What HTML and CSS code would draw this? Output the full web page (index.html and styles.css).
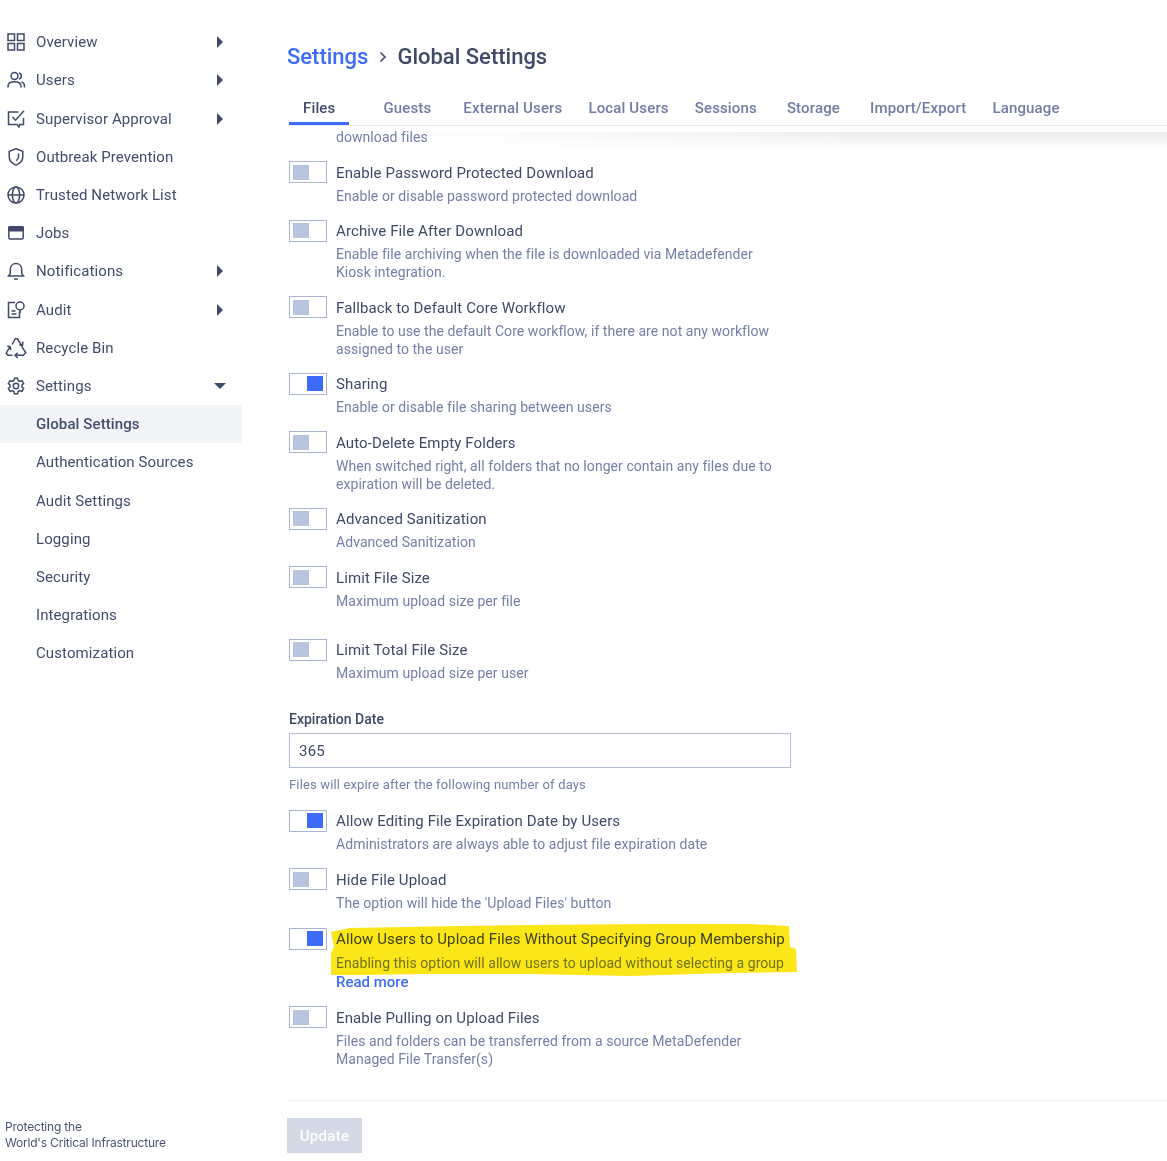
FILE: index.html
```html
<!DOCTYPE html>
<html lang="en">
<head>
<meta charset="utf-8">
<title>Global Settings</title>
<link rel="stylesheet" href="styles.css">
</head>
<body>
<div class="app">
  <aside class="sidebar">
    <nav class="menu">
      <a class="item"><svg class="icon" viewBox="0 0 20 20"><rect x="2" y="2" width="6.5" height="6.5"/><rect x="11.5" y="2" width="6.5" height="6.5"/><rect x="2" y="11.5" width="6.5" height="6.5"/><rect x="11.5" y="11.5" width="6.5" height="6.5"/></svg><span class="label">Overview</span><i class="caret"></i></a>
      <a class="item"><svg class="icon" viewBox="0 0 20 20"><circle cx="8.5" cy="6" r="3.4"/><path d="M2 17.5v-1.2c0-2.8 2.4-4.6 6.5-4.6s6.500 1.800 6.500 4.600v1.200M12.800 2.900c1.600.3 2.600 1.600 2.600 3.100s-1 2.800-2.600 3.100M15.500 11.900c1.700.6 3 2.100 3 4.300v1.300"/></svg><span class="label">Users</span><i class="caret"></i></a>
      <a class="item"><svg class="icon" viewBox="0 0 20 20"><path d="M12.500 3H2.500v12.500h8.500l2 2.500.7-2.500h3.800V9"/><path d="M6.500 8l3 3.200L18 1.800"/></svg><span class="label">Supervisor Approval</span><i class="caret"></i></a>
      <a class="item"><svg class="icon" viewBox="0 0 20 20"><path d="M10 1.800l6.800 2.400v5.600c0 4-2.800 6.900-6.800 8.300-4-1.400-6.800-4.300-6.800-8.300V4.200z"/><path d="M12.500 6.500v3c0 1.800-.9 3.200-2.500 4.200"/></svg><span class="label">Outbreak Prevention</span></a>
      <a class="item"><svg class="icon" viewBox="0 0 20 20"><circle cx="10" cy="10" r="8"/><ellipse cx="10" cy="10" rx="3.600" ry="8"/><path d="M2 10h16"/></svg><span class="label">Trusted Network List</span></a>
      <a class="item"><svg class="icon" viewBox="0 0 20 20"><rect x="2.800" y="3.700" width="14.400" height="12.400" rx="1.500"/><rect class="solid" x="2.800" y="3.700" width="14.400" height="4" rx="1"/></svg><span class="label">Jobs</span></a>
      <a class="item"><svg class="icon" viewBox="0 0 20 20"><path d="M2.500 15h15l-1.800-2.500V8.500C15.700 5 13.300 2.500 10 2.500S4.300 5 4.300 8.500v4z"/><path d="M8 18h4"/></svg><span class="label">Notifications</span><i class="caret"></i></a>
      <a class="item"><svg class="icon" viewBox="0 0 20 20"><path d="M9 2.500H2.500v15h11v-6"/><path d="M5.500 11h4M5.500 14h5"/><circle cx="14" cy="6" r="4"/><path d="M14 10v3"/></svg><span class="label">Audit</span><i class="caret"></i></a>
      <a class="item"><svg class="icon" viewBox="0 0 20 20"><path d="M6 6.500L9.300.7h2l4.700 7.300M13.300 6.300l3 1.700.7-4.300M1.300 8l2.700.7 1 3.300M4 8.700L.2 15.300l1.800 2H6.500M11.700 14.700L9 17.300l2.700 2.700M9 17.300h8.300l2.400-2.600-3.700-5.700"/></svg><span class="label">Recycle Bin</span></a>
      <a class="item"><svg class="icon" viewBox="0 0 20 20"><circle cx="10" cy="10" r="2.700"/><path d="M8.400 2.200h3.200l.5 2.300 1.700 1 2.200-.8 1.600 2.800-1.700 1.500v2l1.700 1.500-1.600 2.800-2.200-.8-1.700 1-.5 2.300H8.400l-.5-2.300-1.700-1-2.200.8-1.600-2.800 1.700-1.500v-2L2.400 7.500 4 4.700l2.200.8 1.700-1z"/></svg><span class="label">Settings</span><i class="caret caret-open"></i></a>
      <a class="item sub active"><span class="label">Global Settings</span></a>
      <a class="item sub"><span class="label">Authentication Sources</span></a>
      <a class="item sub"><span class="label">Audit Settings</span></a>
      <a class="item sub"><span class="label">Logging</span></a>
      <a class="item sub"><span class="label">Security</span></a>
      <a class="item sub"><span class="label">Integrations</span></a>
      <a class="item sub"><span class="label">Customization</span></a>
    </nav>
    <p class="tagline">Protecting the<br>World's Critical Infrastructure</p>
  </aside>

  <main class="main">
    <header class="head">
      <h1 class="crumbs"><a class="crumb-link">Settings</a><svg class="crumb-sep" viewBox="0 0 10 14"><path d="M2.500 2.500L7 7l-4.500 4.500"/></svg><span>Global Settings</span></h1>
      <div class="tabs">
        <a class="tab tab-active">Files</a>
        <a class="tab tab-guests">Guests</a>
        <a class="tab tab-external">External Users</a>
        <a class="tab">Local Users</a>
        <a class="tab">Sessions</a>
        <a class="tab tab-storage">Storage</a>
        <a class="tab tab-import">Import/Export</a>
        <a class="tab">Language</a>
      </div>
      <div class="tabs-shadow"></div>
    </header>

    <section class="content">
      <p class="desc clipped">download files</p>

      <div class="row">
        <span class="toggle"><b></b></span>
        <div class="text"><div class="title">Enable Password Protected Download</div><p class="desc">Enable or disable password protected download</p></div>
      </div>
      <div class="row">
        <span class="toggle"><b></b></span>
        <div class="text"><div class="title">Archive File After Download</div><p class="desc">Enable file archiving when the file is downloaded via Metadefender Kiosk integration.</p></div>
      </div>
      <div class="row">
        <span class="toggle"><b></b></span>
        <div class="text"><div class="title">Fallback to Default Core Workflow</div><p class="desc">Enable to use the default Core workflow, if there are not any workflow assigned to the user</p></div>
      </div>
      <div class="row">
        <span class="toggle on"><b></b></span>
        <div class="text"><div class="title">Sharing</div><p class="desc">Enable or disable file sharing between users</p></div>
      </div>
      <div class="row">
        <span class="toggle"><b></b></span>
        <div class="text"><div class="title">Auto-Delete Empty Folders</div><p class="desc">When switched right, all folders that no longer contain any files due to expiration will be deleted.</p></div>
      </div>
      <div class="row">
        <span class="toggle"><b></b></span>
        <div class="text"><div class="title">Advanced Sanitization</div><p class="desc">Advanced Sanitization</p></div>
      </div>
      <div class="row row-tall">
        <span class="toggle"><b></b></span>
        <div class="text"><div class="title">Limit File Size</div><p class="desc">Maximum upload size per file</p></div>
      </div>
      <div class="row">
        <span class="toggle"><b></b></span>
        <div class="text"><div class="title">Limit Total File Size</div><p class="desc">Maximum upload size per user</p></div>
      </div>

      <div class="field">
        <label class="field-label">Expiration Date</label>
        <div class="input">365</div>
        <p class="hint">Files will expire after the following number of days</p>
      </div>

      <div class="row">
        <span class="toggle on"><b></b></span>
        <div class="text"><div class="title">Allow Editing File Expiration Date by Users</div><p class="desc">Administrators are always able to adjust file expiration date</p></div>
      </div>
      <div class="row">
        <span class="toggle"><b></b></span>
        <div class="text"><div class="title">Hide File Upload</div><p class="desc">The option will hide the 'Upload Files' button</p></div>
      </div>
      <div class="row row-marked">
        <span class="toggle on"><b></b></span>
        <div class="text">
          <div class="title">Allow Users to Upload Files Without Specifying Group Membership</div>
          <p class="desc">Enabling this option will allow users to upload without selecting a group</p>
          <a class="more">Read more</a>
          <svg class="marker" viewBox="0 0 470 56" aria-hidden="true"><path d="M1 9L20 5 130 3 200 2 320 1 420 1 459 3 460 24 466 26 467 49 400 50 300 53 200 51 100 51 30 52 1 52 1 30 4 24z"/></svg>
        </div>
      </div>
      <div class="row">
        <span class="toggle"><b></b></span>
        <div class="text"><div class="title">Enable Pulling on Upload Files</div><p class="desc">Files and folders can be transferred from a source MetaDefender Managed File Transfer(s)</p></div>
      </div>
    </section>

    <footer class="foot">
      <button class="update" type="button">Update</button>
    </footer>
  </main>
</div>
</body>
</html>
```

FILE: styles.css
```css
* { box-sizing: border-box; }
html, body { margin: 0; height: 100%; }
body {
  font-family: Roboto, "Liberation Sans", sans-serif;
  color: #3f4a68;
  background: #fff;
  overflow: hidden;
}
p, h1 { margin: 0; }

.app { display: flex; height: 1161px; }

/* sidebar */
.sidebar {
  width: 242px;
  flex: none;
  display: flex;
  flex-direction: column;
  padding-top: 23.2px;
}
.menu { display: flex; flex-direction: column; }
.item {
  height: 38.2px;
  display: flex;
  align-items: center;
  gap: 10px;
  padding: 0 16px 0 6px;
  font-size: 15px;
  letter-spacing: .1px;
  color: #424d6c;
}
.label { flex: 1; }
.icon {
  width: 20px;
  height: 20px;
  flex: none;
  fill: none;
  stroke: #3f4a68;
  stroke-width: 1.5;
  overflow: visible;
}
.icon .solid { fill: #3f4a68; }
.caret {
  width: 12px;
  height: 12px;
  flex: none;
  position: relative;
}
.caret::after {
  content: "";
  position: absolute;
  left: 3px;
  top: 0;
  border-style: solid;
  border-width: 6px 0 6px 6px;
  border-color: transparent transparent transparent #3f4a68;
}
.caret-open::after {
  left: 0;
  top: 3px;
  border-width: 6px 6px 0 6px;
  border-color: #3f4a68 transparent transparent transparent;
}
.sub { padding-left: 36px; }
.active { background: #f2f4f8; font-weight: 500; }
.tagline {
  margin-top: auto;
  padding: 0 0 10px 5px;
  font-family: Inter, sans-serif;
  font-size: 12px;
  line-height: 16px;
  letter-spacing: -.2px;
  color: #4b5572;
}

/* main */
.main {
  flex: 1;
  min-width: 0;
  display: flex;
  flex-direction: column;
  padding-left: 45px;
}
.head { position: relative; flex: none; height: 127px; padding-top: 41px; }
.crumbs {
  display: flex;
  align-items: center;
  height: 32px;
  font-size: 22px;
  font-weight: 500;
  line-height: 32px;
  color: #3f4a68;
}
.crumb-link { color: #3d6bfa; }
.crumb-sep {
  width: 10px;
  height: 14px;
  margin: 0 9px 0 10px;
  fill: none;
  stroke: #3f4a68;
  stroke-width: 1.6;
}
.tabs {
  display: flex;
  height: 35px;
  margin-top: 18px;
  padding-left: 2px;
  border-bottom: 1px solid #e8e9ef;
  align-items: flex-start;
}
.tab {
  height: 34px;
  padding: 6px 13px 0;
  font-size: 15px;
  line-height: 22px;
  font-weight: 500;
  letter-spacing: .15px;
  color: #707ca3;
}
.tab-active {
  padding: 6px 14px 0;
  color: #3f4a68;
  border-bottom: 3px solid #3d6bfa;
}
.tab-guests { margin-left: 21px; }
.tab-external { margin-left: 6px; }
.tab-storage { margin-left: 4px; }
.tab-import { margin-left: 4px; }
.tabs-shadow {
  position: absolute;
  left: 100px;
  right: 0;
  top: 132px;
  height: 18px;
  pointer-events: none;
  background: linear-gradient(to bottom, rgba(0,0,0,.07), rgba(0,0,0,0));
  -webkit-mask-image: linear-gradient(to right, transparent, #000 60%);
  mask-image: linear-gradient(to right, transparent, #000 60%);
}

.content { flex: 1; min-height: 0; overflow: hidden; padding-left: 2px; }
.row { display: flex; gap: 9px; margin-bottom: 15.5px; }
.row-tall { margin-bottom: 29.5px; }
.row-marked { margin-top: 16.5px; margin-bottom: 14.5px; }
.toggle {
  width: 38px;
  height: 22px;
  flex: none;
  display: flex;
  align-items: center;
  margin-top: -.6px;
  padding: 0 3px;
  border: 1px solid #aab5d3;
  background: #fff;
}
.toggle b { width: 16px; height: 15px; background: #b8c3dd; }
.toggle.on { justify-content: flex-end; }
.toggle.on b { background: #3d6bfa; }
.text { width: 454px; position: relative; }
.title {
  margin-top: 1px;
  font-size: 15px;
  line-height: 20px;
  letter-spacing: .11px;
  color: #3f4a68;
}
.desc {
  margin-top: 4px;
  font-size: 14px;
  line-height: 18px;
  letter-spacing: .06px;
  color: #737fa6;
}
.desc.clipped { margin: .6px 0 16px; padding-left: 47px; }
.row-marked .desc { margin-top: 5px; }
.more {
  display: block;
  margin-top: 1px;
  font-size: 15px;
  line-height: 19px;
  font-weight: 500;
  color: #3d6bfa;
}
.marker {
  position: absolute;
  left: -6px;
  top: -5px;
  width: 470px;
  height: 56px;
  fill: #fbe61a;
  mix-blend-mode: multiply;
  pointer-events: none;
}

.field { margin: 28px 0 16px; width: 502px; }
.field-label {
  display: block;
  font-size: 14px;
  line-height: 18px;
  font-weight: 500;
  color: #3f4a68;
}
.input {
  height: 35px;
  margin-top: 5px;
  padding: 0 9px;
  border: 1px solid #b4bed8;
  font-size: 15px;
  line-height: 35px;
  letter-spacing: .2px;
  color: #3f4a68;
}
.hint {
  margin-top: 8px;
  font-size: 13px;
  line-height: 18px;
  letter-spacing: .15px;
  color: #737fa6;
}

.foot {
  flex: none;
  height: 61px;
  border-top: 1px solid #eeeef5;
  padding-top: 17px;
}
.update {
  display: block;
  width: 75px;
  height: 35px;
  border: 0;
  padding: 0;
  background: #d3d8e5;
  color: #fff;
  font: 500 15px Roboto, sans-serif;
  letter-spacing: .3px;
}
```
